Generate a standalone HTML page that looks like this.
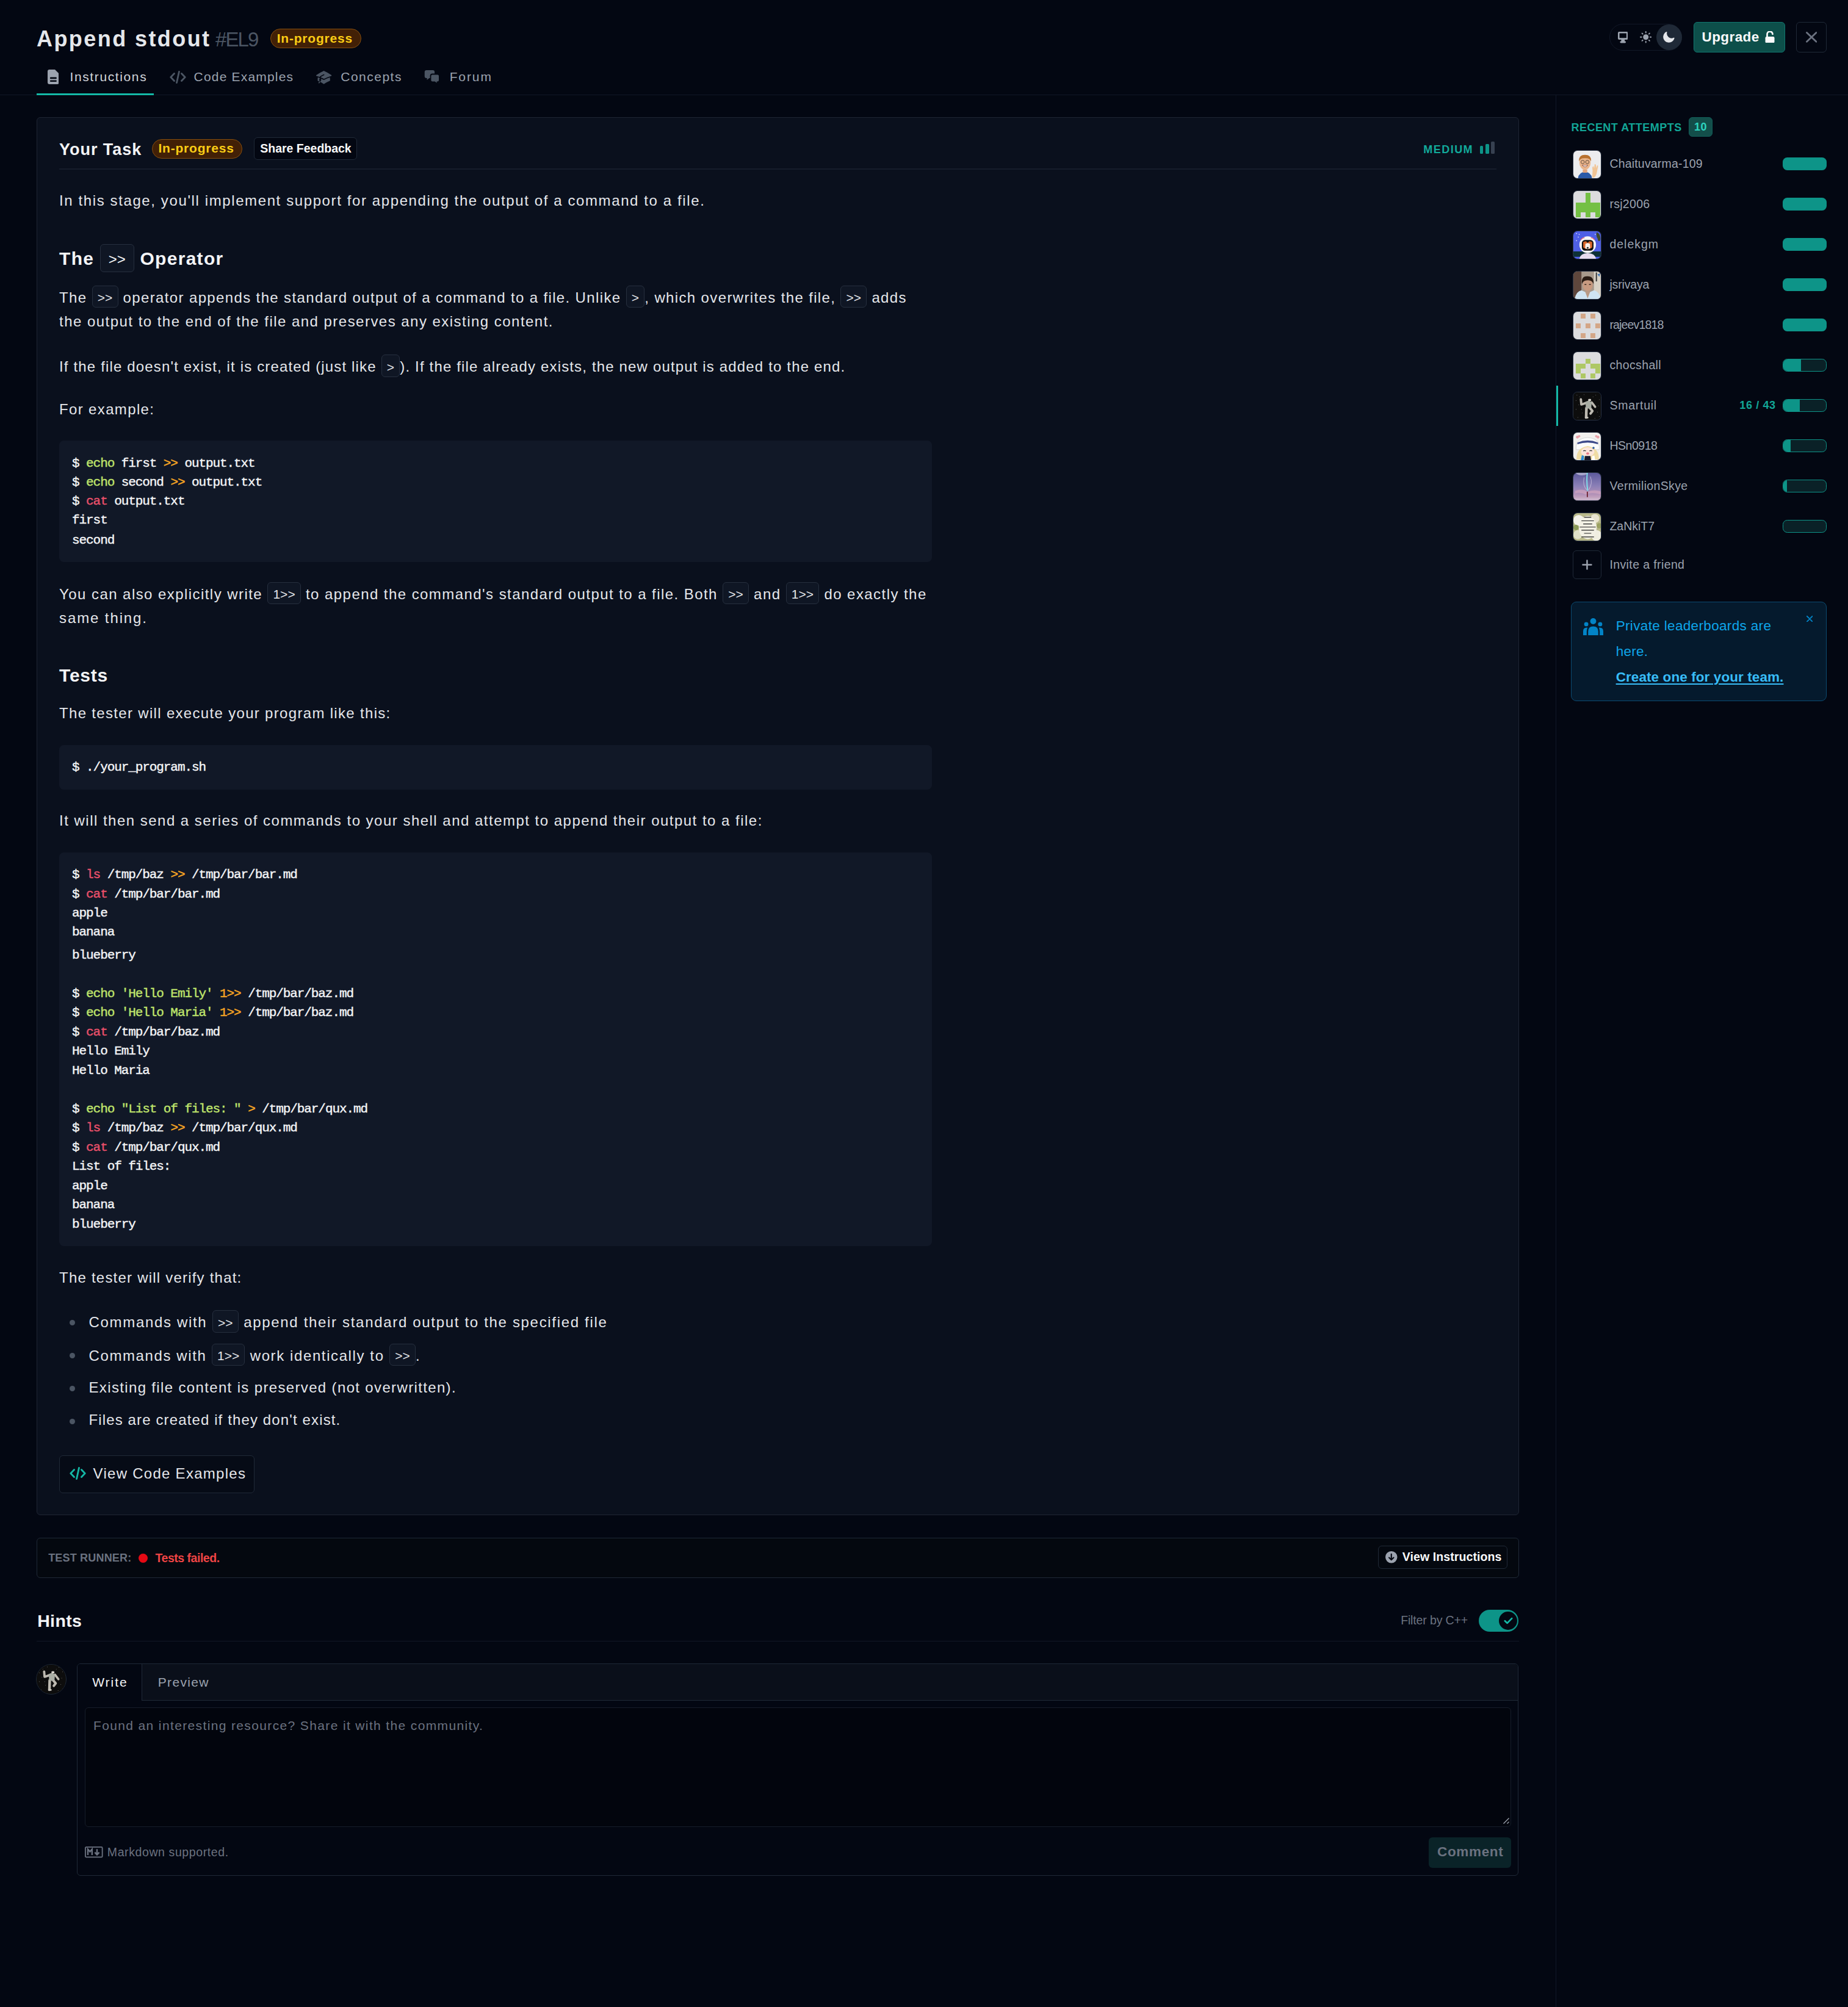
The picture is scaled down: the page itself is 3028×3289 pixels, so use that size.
<!DOCTYPE html>
<html><head><meta charset="utf-8"><title>Append stdout</title>
<style>
html{zoom:1.5;}
html,body{margin:0;padding:0;background:#030712;}
body{width:2018.67px;height:2192.67px;position:relative;overflow:hidden;font-family:"Liberation Sans", sans-serif;}
.t{position:absolute;white-space:pre;}
.s{font-family:"Liberation Sans", sans-serif;}
.m{font-family:"Liberation Mono", monospace;}
.b{position:absolute;box-sizing:border-box;}
.chip{display:inline-block;box-sizing:border-box;border:1px solid #262f3e;background:#0f1624;border-radius:4px;vertical-align:baseline;text-align:center;letter-spacing:0;}
svg{display:block;}
</style></head><body>
<div class="t s " style="left:40px;top:24.38px;font-size:24px;line-height:36px;font-weight:700;color:#e5e7eb;letter-spacing:1.62px;">Append stdout</div>
<div class="t s " style="left:235.3px;top:26.58px;font-size:22px;line-height:33px;font-weight:400;color:#4b5563;letter-spacing:-1.23px;">#EL9</div>
<div class="b" style="left:295.3px;top:31.3px;width:99.2px;height:21.2px;background:#422006;border:1px solid #854d0e;border-radius:999px;"></div>
<div class="t s " style="left:302.5px;top:31.35px;font-size:14px;line-height:21px;font-weight:700;color:#facc15;letter-spacing:0.52px;">In-progress</div>
<svg class="b" style="left:51.7px;top:75.8px" width="12.5" height="16" viewBox="0 0 12.5 16">
<path d="M2 0 H8 L12.5 4.5 V14 Q12.5 16 10.5 16 H2 Q0 16 0 14 V2 Q0 0 2 0 Z" fill="#9ca3af"/>
<rect x="2.6" y="8.4" width="7.3" height="1.7" rx="0.8" fill="#030712"/>
<rect x="2.6" y="11.6" width="7.3" height="1.7" rx="0.8" fill="#030712"/>
</svg>
<div class="t s " style="left:76.3px;top:73.35px;font-size:14px;line-height:21px;font-weight:400;color:#d1d5db;letter-spacing:1.08px;">Instructions</div>
<svg class="b" style="left:185px;top:77px" width="18" height="14" viewBox="0 0 18 14">
<path d="M5 3 L1.2 7 L5 11 M13 3 L16.8 7 L13 11 M10.3 1 L7.7 13" stroke="#4b5563" stroke-width="1.9" fill="none" stroke-linecap="round" stroke-linejoin="round"/>
</svg>
<div class="t s " style="left:211.7px;top:73.35px;font-size:14px;line-height:21px;font-weight:400;color:#9ca3af;letter-spacing:0.79px;">Code Examples</div>
<svg class="b" style="left:344.7px;top:75.5px" width="18.2" height="18.2" viewBox="0 0 24 24" fill="#4b5563">
<path d="M11.7 2.805a.75.75 0 01.6 0A60.65 60.65 0 0122.83 8.72a.75.75 0 01-.231 1.337 49.949 49.949 0 00-9.902 3.912l-.003.002-.34.18a.75.75 0 01-.707 0A50.009 50.009 0 007.5 12.174v-.224c0-.131.067-.248.172-.311a54.614 54.614 0 014.653-2.52.75.75 0 00-.65-1.352 56.129 56.129 0 00-4.78 2.589 1.858 1.858 0 00-.859 1.228 49.803 49.803 0 00-4.634-1.527.75.75 0 01-.231-1.337A60.653 60.653 0 0111.7 2.805z"/>
<path d="M13.06 15.473a48.45 48.45 0 017.666-3.282c.134 1.414.22 2.843.255 4.285a.75.75 0 01-.46.71 47.878 47.878 0 00-8.105 4.342.75.75 0 01-.832 0 47.877 47.877 0 00-8.104-4.342.75.75 0 01-.461-.71c.035-1.442.121-2.87.255-4.286A48.4 48.4 0 016 13.18v1.27a1.5 1.5 0 00-.14 2.508c-.09.38-.222.753-.397 1.11.452.213.901.434 1.346.661a6.729 6.729 0 00.551-1.608 1.5 1.5 0 00.14-2.67v-.645a48.549 48.549 0 013.44 1.668 2.25 2.25 0 002.12 0z"/>
<path d="M4.462 19.462c.42-.419.753-.89 1-1.394.453.213.902.434 1.347.661a6.743 6.743 0 01-1.286 1.794.75.75 0 11-1.06-1.06z"/>
</svg>
<div class="t s " style="left:372.2px;top:73.35px;font-size:14px;line-height:21px;font-weight:400;color:#9ca3af;letter-spacing:0.99px;">Concepts</div>
<svg class="b" style="left:463.5px;top:76px" width="17.5" height="16.5" viewBox="0 0 17.5 16.5" fill="#4b5563">
<path d="M2.5 0.7 H9.4 Q11.4 0.7 11.4 2.7 V7.3 Q11.4 9.3 9.4 9.3 H5.6 L3 11.4 L3.2 9.3 H2.5 Q0.5 9.3 0.5 7.3 V2.7 Q0.5 0.7 2.5 0.7 Z"/>
<path d="M9 5 H14.6 Q16.6 5 16.6 7 V11.6 Q16.6 13.6 14.6 13.6 H14.3 L14.4 15.9 L11.6 13.6 H9 Q7 13.6 7 11.6 V7 Q7 5 9 5 Z" stroke="#030712" stroke-width="1.2"/>
</svg>
<div class="t s " style="left:491.1px;top:73.35px;font-size:14px;line-height:21px;font-weight:400;color:#9ca3af;letter-spacing:1.26px;">Forum</div>
<div class="b" style="left:0px;top:103px;width:2018.67px;height:1px;background:#111827;"></div>
<div class="b" style="left:40px;top:101.7px;width:128px;height:2.3px;background:#14b8a6;"></div>
<div class="b" style="left:1758px;top:25.7px;width:79px;height:29.5px;border:1px solid #111827;border-radius:999px;"></div>
<svg class="b" style="left:1767.2px;top:34.9px" width="11" height="12.3" viewBox="0 0 11 12.3">
<rect x="0" y="0" width="11" height="8.6" rx="1.3" fill="#9ca3af"/>
<rect x="1.7" y="1.7" width="7.6" height="5.1" fill="#030712"/>
<rect x="3.6" y="8.4" width="3.8" height="2.3" fill="#9ca3af"/>
<rect x="2.3" y="10.4" width="6.4" height="1.9" rx="0.9" fill="#9ca3af"/>
</svg>
<svg class="b" style="left:1791.3px;top:34.3px" width="13" height="13" viewBox="-6.5 -6.5 13 13">
<circle cx="0" cy="0" r="3" fill="#9ca3af"/>
<g stroke="#9ca3af" stroke-width="1.3" stroke-linecap="round">
<line x1="0" y1="-5.8" x2="0" y2="-4.8"/><line x1="0" y1="5.8" x2="0" y2="4.8"/>
<line x1="-5.8" y1="0" x2="-4.8" y2="0"/><line x1="5.8" y1="0" x2="4.8" y2="0"/>
<line x1="-4.1" y1="-4.1" x2="-3.4" y2="-3.4"/><line x1="4.1" y1="4.1" x2="3.4" y2="3.4"/>
<line x1="-4.1" y1="4.1" x2="-3.4" y2="3.4"/><line x1="4.1" y1="-4.1" x2="3.4" y2="-3.4"/>
</g></svg>
<div class="b" style="left:1809.3px;top:26.5px;width:28px;height:28px;background:#1f2937;border-radius:999px;"></div>
<svg class="b" style="left:1815.6px;top:33.1px" width="14.6" height="14.6" viewBox="0 0 20 20">
<path d="M7.455 2.004a.75.75 0 01.26.77 7 7 0 009.958 7.967.75.75 0 011.067.853A8.5 8.5 0 116.647 1.921a.75.75 0 01.808.083z" fill="#e5e7eb"/>
</svg>
<div class="b" style="left:1850px;top:24.2px;width:100px;height:32.9px;background:#0d4f4a;border:1px solid #0f766e;border-radius:4px;"></div>
<div class="t s " style="left:1859px;top:29.5px;font-size:15px;line-height:22px;font-weight:700;color:#f9fafb;letter-spacing:0.28px;">Upgrade</div>
<svg class="b" style="left:1927.6px;top:33.8px" width="12" height="13" viewBox="0 0 12 13">
<path d="M3 6 V3.6 A3 3 0 0 1 9 3.3" stroke="#f9fafb" stroke-width="1.8" fill="none" stroke-linecap="round"/>
<rect x="1" y="6" width="10" height="7" rx="1.5" fill="#f9fafb"/>
</svg>
<div class="b" style="left:1962px;top:24.2px;width:33.3px;height:32.9px;border:1px solid #1f2937;border-radius:4px;"></div>
<svg class="b" style="left:1972.4px;top:34.9px" width="12.3" height="11.8" viewBox="0 0 12.3 11.8">
<path d="M1 1 L11.3 10.8 M11.3 1 L1 10.8" stroke="#6b7280" stroke-width="1.9" stroke-linecap="round"/>
</svg>
<div class="b" style="left:1699px;top:103.5px;width:1px;height:2089.17px;background:#111827;"></div>
<div class="b" style="left:40px;top:128.3px;width:1619px;height:1527.2px;background:#0a101d;border:1px solid #1f2533;border-radius:4px;"></div>
<div class="t s " style="left:64.7px;top:149.96px;font-size:18px;line-height:27px;font-weight:700;color:#f3f4f6;letter-spacing:0.64px;">Your Task</div>
<div class="b" style="left:166.2px;top:152px;width:98.8px;height:21px;background:#422006;border:1px solid #854d0e;border-radius:999px;"></div>
<div class="t s " style="left:173px;top:151.35px;font-size:14px;line-height:21px;font-weight:700;color:#facc15;letter-spacing:0.52px;">In-progress</div>
<div class="b" style="left:277.5px;top:150.3px;width:112.2px;height:24.7px;background:#030712;border:1px solid #1f2937;border-radius:4px;"></div>
<div class="t s " style="left:284.2px;top:152.2px;font-size:13px;line-height:20px;font-weight:700;color:#f9fafb;letter-spacing:-0.01px;">Share Feedback</div>
<div class="t s " style="left:1554.9px;top:154.84px;font-size:12px;line-height:18px;font-weight:700;color:#12a99a;letter-spacing:0.97px;">MEDIUM</div>
<div class="b" style="left:1616.5px;top:159.1px;width:3.8px;height:8.9px;background:#0d9488;border-radius:1px;"></div>
<div class="b" style="left:1622.5px;top:157.3px;width:4.1px;height:10.7px;background:#0d9488;border-radius:1px;"></div>
<div class="b" style="left:1628.7px;top:154.6px;width:4.1px;height:13.4px;background:#374151;border-radius:1px;"></div>
<div class="b" style="left:64.7px;top:184.2px;width:1570px;height:1px;background:#161d2b;"></div>
<div class="t s " style="left:64.7px;top:207.16px;font-size:16px;line-height:24px;font-weight:400;color:#e5e7eb;letter-spacing:1.07px;">In this stage, you&#x27;ll implement support for appending the output of a command to a file.</div>
<div class="t s " style="left:64.7px;top:266.37px;font-size:20px;line-height:30px;font-weight:700;color:#f3f4f6;letter-spacing:0.86px;">The <span class="chip" style="width:37.3px;height:31px;font-size:16px;line-height:29px;padding-top:1.96px;font-weight:400;">&gt;&gt;</span> Operator</div>
<div class="t s " style="left:64.7px;top:311.76px;font-size:16px;line-height:24px;font-weight:400;color:#e5e7eb;letter-spacing:0.91px;">The <span class="chip" style="padding:0 5.5px;height:24.3px;font-size:14px;line-height:22.3px;padding-top:1.8px;">&gt;&gt;</span> operator appends the standard output of a command to a file. Unlike <span class="chip" style="padding:0 5.5px;height:24.3px;font-size:14px;line-height:22.3px;padding-top:1.8px;">&gt;</span>, which overwrites the file, <span class="chip" style="padding:0 5.5px;height:24.3px;font-size:14px;line-height:22.3px;padding-top:1.8px;">&gt;&gt;</span> adds</div>
<div class="t s " style="left:64.7px;top:339.16px;font-size:16px;line-height:24px;font-weight:400;color:#e5e7eb;letter-spacing:0.98px;">the output to the end of the file and preserves any existing content.</div>
<div class="t s " style="left:64.7px;top:387.46px;font-size:16px;line-height:24px;font-weight:400;color:#e5e7eb;letter-spacing:0.77px;">If the file doesn&#x27;t exist, it is created (just like <span class="chip" style="padding:0 5.5px;height:24.3px;font-size:14px;line-height:22.3px;padding-top:1.8px;">&gt;</span>). If the file already exists, the new output is added to the end.</div>
<div class="t s " style="left:64.7px;top:435.16px;font-size:16px;line-height:24px;font-weight:400;color:#e5e7eb;letter-spacing:0.9px;">For example:</div>
<div class="b" style="left:64.7px;top:481.3px;width:953.3px;height:132.4px;background:#111827;border-radius:5px;"></div>
<div class="t m " style="left:78.7px;top:496.57px;font-size:14px;line-height:20px;font-weight:400;color:#f3f4f6;letter-spacing:-0.72px;font-weight:400;-webkit-text-stroke:0.3px currentColor;"><span style="color:#f3f4f6">$ </span><span style="color:#bfe36b">echo</span><span style="color:#f3f4f6"> first </span><span style="color:#f5a524">&gt;&gt;</span><span style="color:#f3f4f6"> output.txt</span></div>
<div class="t m " style="left:78.7px;top:517.07px;font-size:14px;line-height:20px;font-weight:400;color:#f3f4f6;letter-spacing:-0.72px;font-weight:400;-webkit-text-stroke:0.3px currentColor;"><span style="color:#f3f4f6">$ </span><span style="color:#bfe36b">echo</span><span style="color:#f3f4f6"> second </span><span style="color:#f5a524">&gt;&gt;</span><span style="color:#f3f4f6"> output.txt</span></div>
<div class="t m " style="left:78.7px;top:538.27px;font-size:14px;line-height:20px;font-weight:400;color:#f3f4f6;letter-spacing:-0.72px;font-weight:400;-webkit-text-stroke:0.3px currentColor;"><span style="color:#f3f4f6">$ </span><span style="color:#e8506a">cat</span><span style="color:#f3f4f6"> output.txt</span></div>
<div class="t m " style="left:78.7px;top:558.77px;font-size:14px;line-height:20px;font-weight:400;color:#f3f4f6;letter-spacing:-0.72px;font-weight:400;-webkit-text-stroke:0.3px currentColor;"><span style="color:#f3f4f6">first</span></div>
<div class="t m " style="left:78.7px;top:580.47px;font-size:14px;line-height:20px;font-weight:400;color:#f3f4f6;letter-spacing:-0.72px;font-weight:400;-webkit-text-stroke:0.3px currentColor;"><span style="color:#f3f4f6">second</span></div>
<div class="t s " style="left:64.7px;top:635.76px;font-size:16px;line-height:24px;font-weight:400;color:#e5e7eb;letter-spacing:0.96px;">You can also explicitly write <span class="chip" style="padding:0 5.5px;height:24.3px;font-size:14px;line-height:22.3px;padding-top:1.8px;">1&gt;&gt;</span> to append the command&#x27;s standard output to a file. Both <span class="chip" style="padding:0 5.5px;height:24.3px;font-size:14px;line-height:22.3px;padding-top:1.8px;">&gt;&gt;</span> and <span class="chip" style="padding:0 5.5px;height:24.3px;font-size:14px;line-height:22.3px;padding-top:1.8px;">1&gt;&gt;</span> do exactly the</div>
<div class="t s " style="left:64.7px;top:663.26px;font-size:16px;line-height:24px;font-weight:400;color:#e5e7eb;letter-spacing:1.26px;">same thing.</div>
<div class="t s " style="left:64.7px;top:722.77px;font-size:20px;line-height:30px;font-weight:700;color:#f3f4f6;letter-spacing:0.51px;">Tests</div>
<div class="t s " style="left:64.7px;top:767.46px;font-size:16px;line-height:24px;font-weight:400;color:#e5e7eb;letter-spacing:0.88px;">The tester will execute your program like this:</div>
<div class="b" style="left:64.7px;top:814.2px;width:953.3px;height:48.8px;background:#111827;border-radius:5px;"></div>
<div class="t m " style="left:78.7px;top:828.77px;font-size:14px;line-height:20px;font-weight:400;color:#f3f4f6;letter-spacing:-0.72px;font-weight:400;-webkit-text-stroke:0.3px currentColor;"><span style="color:#f3f4f6">$ ./your_program.sh</span></div>
<div class="t s " style="left:64.7px;top:884.46px;font-size:16px;line-height:24px;font-weight:400;color:#e5e7eb;letter-spacing:0.99px;">It will then send a series of commands to your shell and attempt to append their output to a file:</div>
<div class="b" style="left:64.7px;top:931.3px;width:953.3px;height:430px;background:#111827;border-radius:5px;"></div>
<div class="t m " style="left:78.7px;top:946.27px;font-size:14px;line-height:20px;font-weight:400;color:#f3f4f6;letter-spacing:-0.72px;font-weight:400;-webkit-text-stroke:0.3px currentColor;"><span style="color:#f3f4f6">$ </span><span style="color:#e8506a">ls</span><span style="color:#f3f4f6"> /tmp/baz </span><span style="color:#f5a524">&gt;&gt;</span><span style="color:#f3f4f6"> /tmp/bar/bar.md</span></div>
<div class="t m " style="left:78.7px;top:967.07px;font-size:14px;line-height:20px;font-weight:400;color:#f3f4f6;letter-spacing:-0.72px;font-weight:400;-webkit-text-stroke:0.3px currentColor;"><span style="color:#f3f4f6">$ </span><span style="color:#e8506a">cat</span><span style="color:#f3f4f6"> /tmp/bar/bar.md</span></div>
<div class="t m " style="left:78.7px;top:988.27px;font-size:14px;line-height:20px;font-weight:400;color:#f3f4f6;letter-spacing:-0.72px;font-weight:400;-webkit-text-stroke:0.3px currentColor;"><span style="color:#f3f4f6">apple</span></div>
<div class="t m " style="left:78.7px;top:1008.77px;font-size:14px;line-height:20px;font-weight:400;color:#f3f4f6;letter-spacing:-0.72px;font-weight:400;-webkit-text-stroke:0.3px currentColor;"><span style="color:#f3f4f6">banana</span></div>
<div class="t m " style="left:78.7px;top:1034.27px;font-size:14px;line-height:20px;font-weight:400;color:#f3f4f6;letter-spacing:-0.72px;font-weight:400;-webkit-text-stroke:0.3px currentColor;"><span style="color:#f3f4f6">blueberry</span></div>
<div class="t m " style="left:78.7px;top:1076.27px;font-size:14px;line-height:20px;font-weight:400;color:#f3f4f6;letter-spacing:-0.72px;font-weight:400;-webkit-text-stroke:0.3px currentColor;"><span style="color:#f3f4f6">$ </span><span style="color:#bfe36b">echo &#x27;Hello Emily&#x27;</span><span style="color:#f3f4f6"> </span><span style="color:#f5a524">1&gt;&gt;</span><span style="color:#f3f4f6"> /tmp/bar/baz.md</span></div>
<div class="t m " style="left:78.7px;top:1096.57px;font-size:14px;line-height:20px;font-weight:400;color:#f3f4f6;letter-spacing:-0.72px;font-weight:400;-webkit-text-stroke:0.3px currentColor;"><span style="color:#f3f4f6">$ </span><span style="color:#bfe36b">echo &#x27;Hello Maria&#x27;</span><span style="color:#f3f4f6"> </span><span style="color:#f5a524">1&gt;&gt;</span><span style="color:#f3f4f6"> /tmp/bar/baz.md</span></div>
<div class="t m " style="left:78.7px;top:1118.27px;font-size:14px;line-height:20px;font-weight:400;color:#f3f4f6;letter-spacing:-0.72px;font-weight:400;-webkit-text-stroke:0.3px currentColor;"><span style="color:#f3f4f6">$ </span><span style="color:#e8506a">cat</span><span style="color:#f3f4f6"> /tmp/bar/baz.md</span></div>
<div class="t m " style="left:78.7px;top:1138.77px;font-size:14px;line-height:20px;font-weight:400;color:#f3f4f6;letter-spacing:-0.72px;font-weight:400;-webkit-text-stroke:0.3px currentColor;"><span style="color:#f3f4f6">Hello Emily</span></div>
<div class="t m " style="left:78.7px;top:1159.97px;font-size:14px;line-height:20px;font-weight:400;color:#f3f4f6;letter-spacing:-0.72px;font-weight:400;-webkit-text-stroke:0.3px currentColor;"><span style="color:#f3f4f6">Hello Maria</span></div>
<div class="t m " style="left:78.7px;top:1202.07px;font-size:14px;line-height:20px;font-weight:400;color:#f3f4f6;letter-spacing:-0.72px;font-weight:400;-webkit-text-stroke:0.3px currentColor;"><span style="color:#f3f4f6">$ </span><span style="color:#bfe36b">echo &quot;List of files: &quot;</span><span style="color:#f3f4f6"> </span><span style="color:#f5a524">&gt;</span><span style="color:#f3f4f6"> /tmp/bar/qux.md</span></div>
<div class="t m " style="left:78.7px;top:1222.97px;font-size:14px;line-height:20px;font-weight:400;color:#f3f4f6;letter-spacing:-0.72px;font-weight:400;-webkit-text-stroke:0.3px currentColor;"><span style="color:#f3f4f6">$ </span><span style="color:#e8506a">ls</span><span style="color:#f3f4f6"> /tmp/baz </span><span style="color:#f5a524">&gt;&gt;</span><span style="color:#f3f4f6"> /tmp/bar/qux.md</span></div>
<div class="t m " style="left:78.7px;top:1244.27px;font-size:14px;line-height:20px;font-weight:400;color:#f3f4f6;letter-spacing:-0.72px;font-weight:400;-webkit-text-stroke:0.3px currentColor;"><span style="color:#f3f4f6">$ </span><span style="color:#e8506a">cat</span><span style="color:#f3f4f6"> /tmp/bar/qux.md</span></div>
<div class="t m " style="left:78.7px;top:1264.97px;font-size:14px;line-height:20px;font-weight:400;color:#f3f4f6;letter-spacing:-0.72px;font-weight:400;-webkit-text-stroke:0.3px currentColor;"><span style="color:#f3f4f6">List of files:</span></div>
<div class="t m " style="left:78.7px;top:1286.27px;font-size:14px;line-height:20px;font-weight:400;color:#f3f4f6;letter-spacing:-0.72px;font-weight:400;-webkit-text-stroke:0.3px currentColor;"><span style="color:#f3f4f6">apple</span></div>
<div class="t m " style="left:78.7px;top:1306.57px;font-size:14px;line-height:20px;font-weight:400;color:#f3f4f6;letter-spacing:-0.72px;font-weight:400;-webkit-text-stroke:0.3px currentColor;"><span style="color:#f3f4f6">banana</span></div>
<div class="t m " style="left:78.7px;top:1327.97px;font-size:14px;line-height:20px;font-weight:400;color:#f3f4f6;letter-spacing:-0.72px;font-weight:400;-webkit-text-stroke:0.3px currentColor;"><span style="color:#f3f4f6">blueberry</span></div>
<div class="t s " style="left:64.7px;top:1383.76px;font-size:16px;line-height:24px;font-weight:400;color:#e5e7eb;letter-spacing:0.81px;">The tester will verify that:</div>
<div class="b" style="left:75.7px;top:1441.7px;width:6px;height:6px;background:#4b5563;border-radius:999px;"></div>
<div class="t s " style="left:97px;top:1431.66px;font-size:16px;line-height:24px;font-weight:400;color:#e5e7eb;letter-spacing:1.12px;">Commands with <span class="chip" style="padding:0 5.5px;height:24.3px;font-size:14px;line-height:22.3px;padding-top:1.8px;">&gt;&gt;</span> append their standard output to the specified file</div>
<div class="b" style="left:75.7px;top:1477.8px;width:6px;height:6px;background:#4b5563;border-radius:999px;"></div>
<div class="t s " style="left:97px;top:1467.76px;font-size:16px;line-height:24px;font-weight:400;color:#e5e7eb;letter-spacing:1.07px;">Commands with <span class="chip" style="padding:0 5.5px;height:24.3px;font-size:14px;line-height:22.3px;padding-top:1.8px;">1&gt;&gt;</span> work identically to <span class="chip" style="padding:0 5.5px;height:24.3px;font-size:14px;line-height:22.3px;padding-top:1.8px;">&gt;&gt;</span>.</div>
<div class="b" style="left:75.7px;top:1513.8px;width:6px;height:6px;background:#4b5563;border-radius:999px;"></div>
<div class="t s " style="left:97px;top:1503.76px;font-size:16px;line-height:24px;font-weight:400;color:#e5e7eb;letter-spacing:0.9px;">Existing file content is preserved (not overwritten).</div>
<div class="b" style="left:75.7px;top:1549.7px;width:6px;height:6px;background:#4b5563;border-radius:999px;"></div>
<div class="t s " style="left:97px;top:1539.66px;font-size:16px;line-height:24px;font-weight:400;color:#e5e7eb;letter-spacing:0.75px;">Files are created if they don&#x27;t exist.</div>
<div class="b" style="left:64.7px;top:1590px;width:213.6px;height:41.2px;border:1px solid #1f2937;border-radius:4px;background:#060b16;"></div>
<svg class="b" style="left:76.2px;top:1602.5px" width="18" height="14" viewBox="0 0 18 14">
<path d="M5 3 L1.2 7 L5 11 M13 3 L16.8 7 L13 11 M10.3 1 L7.7 13" stroke="#14b8a6" stroke-width="1.9" fill="none" stroke-linecap="round" stroke-linejoin="round"/>
</svg>
<div class="t s " style="left:101.7px;top:1598.26px;font-size:16px;line-height:24px;font-weight:400;color:#e5e7eb;letter-spacing:0.85px;">View Code Examples</div>
<div class="t s " style="left:1716.3px;top:130.34px;font-size:12px;line-height:18px;font-weight:700;color:#12a596;letter-spacing:0.32px;">RECENT ATTEMPTS</div>
<div class="b" style="left:1844.7px;top:128px;width:25.8px;height:21.2px;background:#134e4a;border:1px solid #115e59;border-radius:4px;"></div>
<div class="t s " style="left:1844.7px;top:130.14px;font-size:12px;line-height:18px;font-weight:700;color:#2dd4bf;letter-spacing:0.2px;width:25.8px;text-align:center;">10</div>
<div class="b" style="left:1718.3px;top:163.8px;width:31.3px;height:31.3px;border-radius:5px;overflow:hidden;border:1px solid #2a3445"><svg width="31.3" height="31.3" viewBox="0 0 32 32"><rect width="32" height="32" fill="#ececee"/><path d="M5 32 Q5.5 24 13 23.5 Q20.5 24 21 32Z" fill="#2b5aa8"/><path d="M10.5 21 H15.5 V24.5 H10.5Z" fill="#e3a57c"/><ellipse cx="13" cy="13.5" rx="6.3" ry="7.6" fill="#eab58c"/><path d="M6.3 12 Q5.8 4.5 13 4.6 Q20.3 4.5 19.8 12 Q18.5 8 13 8.3 Q7.6 8 6.3 12Z" fill="#b8712f"/><circle cx="10.4" cy="12.6" r="1.9" fill="none" stroke="#4a3a30" stroke-width="0.6"/><circle cx="15.6" cy="12.6" r="1.9" fill="none" stroke="#4a3a30" stroke-width="0.6"/><path d="M9.8 16.2 Q13 19.8 16.2 16.2Z" fill="#fff" stroke="#7a3324" stroke-width="0.5"/><path d="M21 30 L21.5 22 Q20.5 17.5 22.6 17.3 L23.2 20 L23.8 15 Q25 14.7 25.2 16 L25.4 19.5 L26.6 16.2 Q27.8 16.3 27.5 17.8 L26.3 24 Q25.5 28.5 23 30Z" fill="#f1c495"/></svg></div>
<div class="t s " style="left:1758.3px;top:168.8px;font-size:13px;line-height:20px;font-weight:400;color:#9ca3af;letter-spacing:0.12px;">Chaituvarma-109</div>
<div class="b" style="left:1947.2px;top:172px;width:48.1px;height:13.8px;background:#0d9488;border-radius:5px;"></div>
<div class="b" style="left:1718.3px;top:207.8px;width:31.3px;height:31.3px;border-radius:5px;overflow:hidden;border:1px solid #2a3445"><svg width="31.3" height="31.3" viewBox="0 0 32 32"><rect width="32" height="32" fill="#dcdcde"/><g fill="#74c044" shape-rendering="crispEdges"><rect x="13.43" y="2.32" width="5.5" height="5.5"/><rect x="13.43" y="7.77" width="5.5" height="5.5"/><rect x="2.53" y="13.22" width="5.5" height="5.5"/><rect x="7.98" y="13.22" width="5.5" height="5.5"/><rect x="13.43" y="13.22" width="5.5" height="5.5"/><rect x="18.88" y="13.22" width="5.5" height="5.5"/><rect x="24.33" y="13.22" width="5.5" height="5.5"/><rect x="2.53" y="18.67" width="5.5" height="5.5"/><rect x="7.98" y="18.67" width="5.5" height="5.5"/><rect x="13.43" y="18.67" width="5.5" height="5.5"/><rect x="18.88" y="18.67" width="5.5" height="5.5"/><rect x="24.33" y="18.67" width="5.5" height="5.5"/><rect x="2.53" y="24.12" width="5.5" height="5.5"/><rect x="13.43" y="24.12" width="5.5" height="5.5"/><rect x="24.33" y="24.12" width="5.5" height="5.5"/></g></svg></div>
<div class="t s " style="left:1758.3px;top:212.8px;font-size:13px;line-height:20px;font-weight:400;color:#9ca3af;letter-spacing:0.19px;">rsj2006</div>
<div class="b" style="left:1947.2px;top:216px;width:48.1px;height:13.8px;background:#0d9488;border-radius:5px;"></div>
<div class="b" style="left:1718.3px;top:251.8px;width:31.3px;height:31.3px;border-radius:5px;overflow:hidden;border:1px solid #2a3445"><svg width="31.3" height="31.3" viewBox="0 0 32 32"><rect width="32" height="32" fill="#4f5fe6"/><g fill="#dfe3ff"><rect x="3" y="2" width="1" height="1"/><rect x="6" y="3" width="1" height="1"/><rect x="5" y="6" width="1" height="1"/><rect x="24" y="3" width="1" height="1"/><rect x="3" y="10" width="1" height="1"/></g><path d="M26 1 Q31 3 30 10 Q28 13 27 8 Q25 5 26 1Z" fill="#3f4a2a"/><rect y="22.5" width="32" height="6" fill="#0e3136"/><path d="M6.5 32 Q7 24.5 16 24.5 Q25 24.5 25.5 32Z" fill="#e6dcef"/><circle cx="16" cy="15" r="9.3" fill="#f5f5f7"/><path d="M8.3 9.5 Q11 6.5 12.5 7.5" stroke="#e06070" stroke-width="1" fill="none"/><path d="M23.7 9.5 Q21 6.5 19.5 7.5" stroke="#e06070" stroke-width="1" fill="none"/><rect x="9.5" y="9.7" width="13" height="12" rx="3.5" fill="#111"/><path d="M11 12 L14 11 L16 13 L18 11 L21 12 L21 18 Q16 22 11 18Z" fill="#d9662a"/><path d="M13.5 14 L16 13.2 L18.5 14 L18.8 19 Q16 21 13.2 19Z" fill="#f6f0ea"/><circle cx="16" cy="18.6" r="1" fill="#222"/></svg></div>
<div class="t s " style="left:1758.3px;top:256.8px;font-size:13px;line-height:20px;font-weight:400;color:#9ca3af;letter-spacing:0.66px;">delekgm</div>
<div class="b" style="left:1947.2px;top:260px;width:48.1px;height:13.8px;background:#0d9488;border-radius:5px;"></div>
<div class="b" style="left:1718.3px;top:295.8px;width:31.3px;height:31.3px;border-radius:5px;overflow:hidden;border:1px solid #2a3445"><svg width="31.3" height="31.3" viewBox="0 0 32 32"><rect width="32" height="32" fill="#a89a8c"/><rect width="9" height="32" fill="#5e463c"/><rect x="23" width="9" height="32" fill="#d8d2c6"/><rect x="25" y="1" width="1.5" height="10" fill="#444"/><path d="M27 3 L30 2 L29 6Z" fill="#3b6fb0"/><path d="M1 32 Q3 22 9 21 L16 24 L23 21 Q29 22 31 32Z" fill="#cfe4f2"/><path d="M13 22 L16 30 L19 22Z" fill="#b99a85"/><ellipse cx="16" cy="14.8" rx="5.6" ry="7" fill="#c89a80"/><path d="M9.6 14 Q8.5 5 15.5 5.3 Q23.2 5 22.4 14 Q21 9.5 16 9.7 Q11 9.5 9.6 14Z" fill="#2a1c14"/><path d="M12.5 14.5 H14.5 M17.5 14.5 H19.5" stroke="#3a2a20" stroke-width="0.9"/></svg></div>
<div class="t s " style="left:1758.3px;top:300.8px;font-size:13px;line-height:20px;font-weight:400;color:#9ca3af;letter-spacing:-0.11px;">jsrivaya</div>
<div class="b" style="left:1947.2px;top:304px;width:48.1px;height:13.8px;background:#0d9488;border-radius:5px;"></div>
<div class="b" style="left:1718.3px;top:339.8px;width:31.3px;height:31.3px;border-radius:5px;overflow:hidden;border:1px solid #2a3445"><svg width="31.3" height="31.3" viewBox="0 0 32 32"><rect width="32" height="32" fill="#dcdcde"/><g fill="#d3a687" shape-rendering="crispEdges"><rect x="7.98" y="2.32" width="5.5" height="5.5"/><rect x="18.88" y="2.32" width="5.5" height="5.5"/><rect x="2.53" y="13.22" width="5.5" height="5.5"/><rect x="13.43" y="13.22" width="5.5" height="5.5"/><rect x="24.33" y="13.22" width="5.5" height="5.5"/><rect x="7.98" y="24.12" width="5.5" height="5.5"/><rect x="18.88" y="24.12" width="5.5" height="5.5"/></g></svg></div>
<div class="t s " style="left:1758.3px;top:344.8px;font-size:13px;line-height:20px;font-weight:400;color:#9ca3af;letter-spacing:-0.56px;">rajeev1818</div>
<div class="b" style="left:1947.2px;top:348px;width:48.1px;height:13.8px;background:#0d9488;border-radius:5px;"></div>
<div class="b" style="left:1718.3px;top:383.8px;width:31.3px;height:31.3px;border-radius:5px;overflow:hidden;border:1px solid #2a3445"><svg width="31.3" height="31.3" viewBox="0 0 32 32"><rect width="32" height="32" fill="#dcdcde"/><g fill="#aec865" shape-rendering="crispEdges"><rect x="13.43" y="7.77" width="5.5" height="5.5"/><rect x="2.53" y="13.22" width="5.5" height="5.5"/><rect x="7.98" y="13.22" width="5.5" height="5.5"/><rect x="18.88" y="13.22" width="5.5" height="5.5"/><rect x="24.33" y="13.22" width="5.5" height="5.5"/><rect x="2.53" y="18.67" width="5.5" height="5.5"/><rect x="24.33" y="18.67" width="5.5" height="5.5"/><rect x="7.98" y="24.12" width="5.5" height="5.5"/><rect x="18.88" y="24.12" width="5.5" height="5.5"/></g></svg></div>
<div class="t s " style="left:1758.3px;top:388.8px;font-size:13px;line-height:20px;font-weight:400;color:#9ca3af;letter-spacing:0.24px;">chocshall</div>
<div class="b" style="left:1947.2px;top:392px;width:48.1px;height:13.8px;background:#0a2127;border:1px solid #0d9488;border-radius:5px;overflow:hidden;"><div style="position:absolute;left:0;top:0;bottom:0;width:19.2px;background:#0d9488;"></div></div>
<div class="b" style="left:1718.3px;top:427.8px;width:31.3px;height:31.3px;border-radius:5px;overflow:hidden;border:1px solid #2a3445"><svg width="31.3" height="31.3" viewBox="0 0 32 32"><rect width="32" height="32" fill="#0d0d0d"/><circle cx="4.0" cy="3.0" r="0.35" fill="#777"/><circle cx="7.0" cy="5.0" r="0.35" fill="#777"/><circle cx="12.0" cy="2.5" r="0.35" fill="#777"/><circle cx="25.0" cy="3.0" r="0.35" fill="#777"/><circle cx="29.0" cy="8.0" r="0.35" fill="#777"/><circle cx="3.0" cy="9.0" r="0.35" fill="#777"/><circle cx="6.0" cy="14.0" r="0.35" fill="#777"/><circle cx="3.0" cy="19.0" r="0.35" fill="#777"/><circle cx="10.0" cy="23.0" r="0.35" fill="#777"/><circle cx="27.0" cy="22.0" r="0.35" fill="#777"/><circle cx="29.0" cy="27.0" r="0.35" fill="#777"/><circle cx="5.0" cy="28.0" r="0.35" fill="#777"/><circle cx="24.0" cy="29.0" r="0.35" fill="#777"/><circle cx="22.0" cy="5.0" r="0.35" fill="#777"/><circle cx="9.0" cy="19.0" r="0.35" fill="#777"/><circle cx="28.0" cy="15.0" r="0.35" fill="#777"/><g stroke="#bdb9b0" stroke-linecap="round" stroke-linejoin="round" fill="none"><path d="M8.4 7.8 L8.9 13.6 L15 11.5" stroke-width="2.6"/><path d="M20.5 11.2 L24.4 16.3" stroke-width="2.4"/><path d="M14.6 17.6 L14.3 28" stroke-width="3"/><path d="M18.5 17.5 L21.3 20.8 L19.2 23.6" stroke-width="2.8"/></g><path d="M13.5 10.5 Q16 9 18 9.5 L20.5 11 L20 17 Q17 19 14 17.5 Z" fill="#a9ada4"/><rect x="16.6" y="7.4" width="3.2" height="2.4" rx="0.8" fill="#d6d3cc"/><rect x="12.8" y="27.3" width="4" height="1.8" rx="0.8" fill="#c8c4bc"/></svg></div>
<div class="t s " style="left:1758.3px;top:432.8px;font-size:13px;line-height:20px;font-weight:400;color:#9ca3af;letter-spacing:0.5px;">Smartuil</div>
<div class="b" style="left:1947.2px;top:436px;width:48.1px;height:13.8px;background:#0a2127;border:1px solid #0d9488;border-radius:5px;overflow:hidden;"><div style="position:absolute;left:0;top:0;bottom:0;width:18px;background:#0d9488;"></div></div>
<div class="b" style="left:1718.3px;top:471.8px;width:31.3px;height:31.3px;border-radius:5px;overflow:hidden;border:1px solid #2a3445"><svg width="31.3" height="31.3" viewBox="0 0 32 32"><rect width="32" height="32" fill="#f2f0ee"/><path d="M3 19 Q2 6 16 5.5 Q30 6 29 19Z" fill="#fbfbfb" stroke="#c9c9c9" stroke-width="0.5"/><path d="M4.5 11 Q16 6.5 27.5 11 L27.5 13 Q16 9 4.5 13Z" fill="#3d4a8a"/><g fill="#e8a0a8"><circle cx="4.5" cy="5" r="1.6"/><circle cx="6.5" cy="4" r="1.3"/><circle cx="25.5" cy="4" r="1.3"/><circle cx="27.5" cy="5" r="1.6"/></g><path d="M3.5 30 Q3 17 16 15 Q29 17 28.5 30Z" fill="#f0dca4"/><ellipse cx="16" cy="21.5" rx="7.5" ry="5.2" fill="#fce6dc"/><path d="M11 20.5 Q12.5 19.5 14 20.5 M18 20.5 Q19.5 19.5 21 20.5" stroke="#333" stroke-width="0.8" fill="none"/><ellipse cx="16" cy="23.3" rx="1.6" ry="1.3" fill="#e77a88"/><circle cx="22.5" cy="17" r="1.2" fill="#2b5aa0"/><path d="M8 32 L9.5 25 L12 26 L11.5 32Z" fill="#2f8fd8"/><path d="M12 32 L13 26 L19 26 L20 32Z" fill="#1a1a2a"/><path d="M20.5 32 L21 26 L23.5 25.5 L24.5 32Z" fill="#ffffff"/></svg></div>
<div class="t s " style="left:1758.3px;top:476.8px;font-size:13px;line-height:20px;font-weight:400;color:#9ca3af;letter-spacing:-0.32px;">HSn0918</div>
<div class="b" style="left:1947.2px;top:480px;width:48.1px;height:13.8px;background:#0a2127;border:1px solid #0d9488;border-radius:5px;overflow:hidden;"><div style="position:absolute;left:0;top:0;bottom:0;width:7.9px;background:#0d9488;"></div></div>
<div class="b" style="left:1718.3px;top:515.8px;width:31.3px;height:31.3px;border-radius:5px;overflow:hidden;border:1px solid #2a3445"><svg width="31.3" height="31.3" viewBox="0 0 32 32"><defs><linearGradient id="vg" x1="0" y1="0" x2="0" y2="1"><stop offset="0" stop-color="#5d5a9c"/><stop offset="0.45" stop-color="#8a7fb6"/><stop offset="0.75" stop-color="#b392b8"/><stop offset="1" stop-color="#d9b8c6"/></linearGradient></defs><rect width="32" height="32" fill="url(#vg)"/><path d="M2 0 Q8 5 16 1 L16 0Z" fill="#c8c6e0" opacity="0.7"/><path d="M2 20 Q10 17 16 21 Q24 18 31 21 L31 24 Q20 21 14 24 Q7 21 2 23Z" fill="#d8a8c0" opacity="0.6"/><path d="M15.5 0 Q14.5 10 16 20" stroke="#7fe8f0" stroke-width="1.2" fill="none"/><path d="M12 5 Q10 14 15 19 M19 4 Q22 12 17 19" stroke="#e8e0f0" stroke-width="0.4" fill="none"/><rect x="15" y="21" width="1.2" height="6" fill="#6a2030"/><rect y="28" width="32" height="4" fill="#c8b0c8"/></svg></div>
<div class="t s " style="left:1758.3px;top:520.8px;font-size:13px;line-height:20px;font-weight:400;color:#9ca3af;letter-spacing:0.23px;">VermilionSkye</div>
<div class="b" style="left:1947.2px;top:524px;width:48.1px;height:13.8px;background:#0a2127;border:1px solid #0d9488;border-radius:5px;overflow:hidden;"><div style="position:absolute;left:0;top:0;bottom:0;width:4px;background:#0d9488;"></div></div>
<div class="b" style="left:1718.3px;top:559.8px;width:31.3px;height:31.3px;border-radius:5px;overflow:hidden;border:1px solid #2a3445"><svg width="31.3" height="31.3" viewBox="0 0 32 32"><rect width="32" height="32" fill="#b9b98a"/><circle cx="6" cy="8" r="6" fill="#f4f2ea"/><circle cx="24" cy="6" r="5" fill="#e8e4cf"/><circle cx="5" cy="24" r="5" fill="#e0e0c8"/><circle cx="26" cy="25" r="6" fill="#f0eee0"/><ellipse cx="16" cy="16" rx="10" ry="13" fill="#f2f0e4"/><circle cx="3" cy="16" r="3" fill="#8a9a58"/><circle cx="29" cy="14" r="3" fill="#9aa060"/><g stroke="#222" stroke-width="0.75"><line x1="12" y1="4.5" x2="20" y2="4.5"/><line x1="9" y1="8.5" x2="23" y2="8.5"/><line x1="11" y1="12" x2="21" y2="12"/><line x1="7" y1="15.5" x2="25" y2="15.5"/><line x1="9" y1="19" x2="23" y2="19"/><line x1="12" y1="22.5" x2="20" y2="22.5"/><line x1="9" y1="26.5" x2="23" y2="26.5"/></g></svg></div>
<div class="t s " style="left:1758.3px;top:564.8px;font-size:13px;line-height:20px;font-weight:400;color:#9ca3af;letter-spacing:-0px;">ZaNkiT7</div>
<div class="b" style="left:1947.2px;top:568px;width:48.1px;height:13.8px;background:#0a2127;border:1px solid #0d9488;border-radius:5px;overflow:hidden;"><div style="position:absolute;left:0;top:0;bottom:0;width:0px;background:#0d9488;"></div></div>
<div class="b" style="left:1700px;top:421.3px;width:2px;height:44px;background:#14b8a6;"></div>
<div class="t s " style="left:1900.2px;top:433.94px;font-size:12px;line-height:18px;font-weight:700;color:#12a596;letter-spacing:0.42px;">16 / 43</div>
<div class="b" style="left:1718.3px;top:601.3px;width:31.2px;height:31.7px;border:1px solid #1f2937;border-radius:4px;"></div>
<svg class="b" style="left:1728.3px;top:611.3px" width="11.3" height="11.3" viewBox="0 0 11.3 11.3">
<path d="M5.65 1 V10.3 M1 5.65 H10.3" stroke="#9ca3af" stroke-width="1.7" stroke-linecap="round"/></svg>
<div class="t s " style="left:1758.3px;top:606.6px;font-size:13px;line-height:20px;font-weight:400;color:#9ca3af;letter-spacing:0.26px;">Invite a friend</div>
<div class="b" style="left:1716.2px;top:657.6px;width:279.1px;height:108.6px;background:#051a2d;border:1px solid #0b4a70;border-radius:6px;"></div>
<svg class="b" style="left:1729.3px;top:675px" width="22" height="19" viewBox="0 0 22 19">
<g fill="#0284c7"><circle cx="11" cy="3.3" r="3.3"/><circle cx="3.4" cy="6.6" r="2.3"/><circle cx="18.6" cy="6.6" r="2.3"/>
<path d="M5.5 19 V14.5 Q5.5 9 11 9 Q16.5 9 16.5 14.5 V19 Z"/><path d="M0 19 V14.5 Q0 10.3 3.8 10.3 Q4.5 10.3 4.8 10.5 Q3.9 12 3.9 14.5 V19Z"/><path d="M22 19 V14.5 Q22 10.3 18.2 10.3 Q17.5 10.3 17.2 10.5 Q18.1 12 18.1 14.5 V19Z"/></g></svg>
<div class="t s " style="left:1765.1px;top:672.5px;font-size:15px;line-height:22px;font-weight:400;color:#0ea5e9;letter-spacing:0.23px;">Private leaderboards are</div>
<div class="t s " style="left:1765.1px;top:700.8px;font-size:15px;line-height:22px;font-weight:400;color:#0ea5e9;letter-spacing:0.2px;">here.</div>
<div class="t s " style="left:1765.1px;top:728.5px;font-size:15px;line-height:22px;font-weight:700;color:#38bdf8;letter-spacing:0.06px;text-decoration:underline;text-underline-offset:2px;">Create one for your team.</div>
<svg class="b" style="left:1973.3px;top:672.6px" width="7" height="7" viewBox="0 0 7 7">
<path d="M0.5 0.5 L6.5 6.5 M6.5 0.5 L0.5 6.5" stroke="#0284c7" stroke-width="1.2" stroke-linecap="round"/></svg>
<div class="b" style="left:40px;top:1680.3px;width:1619px;height:43.9px;border:1px solid #1f2937;border-radius:4px;background:#04080f;"></div>
<div class="t s " style="left:52.8px;top:1693.54px;font-size:12px;line-height:18px;font-weight:700;color:#6b7280;letter-spacing:0.12px;">TEST RUNNER:</div>
<div class="b" style="left:151.2px;top:1697.5px;width:10.1px;height:10.1px;background:#e50914;border-radius:999px;"></div>
<div class="t s " style="left:169.7px;top:1692.2px;font-size:13px;line-height:20px;font-weight:700;color:#ef4444;letter-spacing:-0.32px;">Tests failed.</div>
<div class="b" style="left:1505.6px;top:1688.8px;width:140.8px;height:24.9px;border:1px solid #1f2937;border-radius:4px;"></div>
<svg class="b" style="left:1513.4px;top:1694.8px" width="13" height="13" viewBox="0 0 13 13">
<circle cx="6.5" cy="6.5" r="6.5" fill="#9ca3af"/><path d="M6.5 3.2 V9.3 M4 7 L6.5 9.5 L9 7" stroke="#030712" stroke-width="1.4" fill="none" stroke-linecap="round" stroke-linejoin="round"/></svg>
<div class="t s " style="left:1531.9px;top:1690.5px;font-size:13px;line-height:20px;font-weight:700;color:#f9fafb;letter-spacing:0.06px;">View Instructions</div>
<div class="t s " style="left:40.8px;top:1756.72px;font-size:19px;line-height:28px;font-weight:700;color:#f3f4f6;letter-spacing:0.23px;">Hints</div>
<div class="t s " style="left:1530.1px;top:1760.1px;font-size:13px;line-height:20px;font-weight:400;color:#6b7280;letter-spacing:-0.09px;">Filter by C++</div>
<div class="b" style="left:1615.3px;top:1758.7px;width:43.7px;height:23.8px;background:#0d9488;border-radius:999px;"></div>
<div class="b" style="left:1637.5px;top:1760.6px;width:19.8px;height:20px;background:#030712;border-radius:999px;"></div>
<svg class="b" style="left:1642.5px;top:1766.5px" width="10" height="8" viewBox="0 0 10 8">
<path d="M1.2 4.2 L3.8 6.6 L8.8 1.4" stroke="#14b8a6" stroke-width="1.8" fill="none" stroke-linecap="round" stroke-linejoin="round"/></svg>
<div class="b" style="left:40px;top:1792.4px;width:1619px;height:1px;background:#111827;"></div>
<div class="b" style="left:39.2px;top:1818.3px;width:33.3px;height:33.3px;border-radius:999px;overflow:hidden;background:#0d0d0d;border:1px solid #1f2937"><svg width="31.3" height="31.3" viewBox="0 0 32 32"><rect width="32" height="32" fill="#0d0d0d"/><circle cx="4.0" cy="3.0" r="0.35" fill="#777"/><circle cx="7.0" cy="5.0" r="0.35" fill="#777"/><circle cx="12.0" cy="2.5" r="0.35" fill="#777"/><circle cx="25.0" cy="3.0" r="0.35" fill="#777"/><circle cx="29.0" cy="8.0" r="0.35" fill="#777"/><circle cx="3.0" cy="9.0" r="0.35" fill="#777"/><circle cx="6.0" cy="14.0" r="0.35" fill="#777"/><circle cx="3.0" cy="19.0" r="0.35" fill="#777"/><circle cx="10.0" cy="23.0" r="0.35" fill="#777"/><circle cx="27.0" cy="22.0" r="0.35" fill="#777"/><circle cx="29.0" cy="27.0" r="0.35" fill="#777"/><circle cx="5.0" cy="28.0" r="0.35" fill="#777"/><circle cx="24.0" cy="29.0" r="0.35" fill="#777"/><circle cx="22.0" cy="5.0" r="0.35" fill="#777"/><circle cx="9.0" cy="19.0" r="0.35" fill="#777"/><circle cx="28.0" cy="15.0" r="0.35" fill="#777"/><g stroke="#bdb9b0" stroke-linecap="round" stroke-linejoin="round" fill="none"><path d="M8.4 7.8 L8.9 13.6 L15 11.5" stroke-width="2.6"/><path d="M20.5 11.2 L24.4 16.3" stroke-width="2.4"/><path d="M14.6 17.6 L14.3 28" stroke-width="3"/><path d="M18.5 17.5 L21.3 20.8 L19.2 23.6" stroke-width="2.8"/></g><path d="M13.5 10.5 Q16 9 18 9.5 L20.5 11 L20 17 Q17 19 14 17.5 Z" fill="#a9ada4"/><rect x="16.6" y="7.4" width="3.2" height="2.4" rx="0.8" fill="#d6d3cc"/><rect x="12.8" y="27.3" width="4" height="1.8" rx="0.8" fill="#c8c4bc"/></svg></div>
<div class="b" style="left:84.2px;top:1817.2px;width:1574.8px;height:232px;border:1px solid #1f2937;border-radius:4px;background:#030712;overflow:hidden;"><div style="position:absolute;left:0;top:0;right:0;height:40px;background:#0a0f1a;border-bottom:1px solid #1f2937;box-sizing:border-box"></div><div style="position:absolute;left:0;top:0;width:70.8px;height:40px;background:#030712;border-right:1px solid #1f2937;box-sizing:border-box"></div></div>
<div class="t s " style="left:100.8px;top:1827.15px;font-size:14px;line-height:21px;font-weight:400;color:#f3f4f6;letter-spacing:1.32px;">Write</div>
<div class="t s " style="left:172.5px;top:1827.15px;font-size:14px;line-height:21px;font-weight:400;color:#9ca3af;letter-spacing:0.9px;">Preview</div>
<div class="b" style="left:92.8px;top:1865.5px;width:1557.6px;height:130.8px;border:1px solid #161d2a;border-radius:4px;background:#02050d;"></div>
<div class="t s " style="left:102px;top:1874.65px;font-size:14px;line-height:21px;font-weight:400;color:#6b7280;letter-spacing:0.91px;">Found an interesting resource? Share it with the community.</div>
<svg class="b" style="left:1641px;top:1985.5px" width="8" height="8" viewBox="0 0 8 8">
<path d="M1 7 L7 1 M5 7 L7 5" stroke="#9ca3af" stroke-width="0.9"/></svg>
<svg class="b" style="left:92.8px;top:2017.5px" width="19.7" height="12.2" viewBox="0 0 19.7 12.2">
<rect x="0.6" y="0.6" width="18.5" height="11" rx="1" stroke="#6b7280" stroke-width="1.2" fill="none"/>
<path d="M3.3 9.3 V3 L5.6 5.6 L7.9 3 V9.3" stroke="#6b7280" stroke-width="1.6" fill="none"/>
<path d="M13.3 2.8 V8.6 M10.9 6.4 L13.3 9 L15.7 6.4" stroke="#6b7280" stroke-width="1.6" fill="none"/></svg>
<div class="t s " style="left:117.2px;top:2013.5px;font-size:13px;line-height:20px;font-weight:400;color:#6b7280;letter-spacing:0.4px;">Markdown supported.</div>
<div class="b" style="left:1560.7px;top:2007.2px;width:89.7px;height:33.2px;background:#0a2328;border-radius:4px;"></div>
<div class="t s " style="left:1570px;top:2012.3px;font-size:15px;line-height:22px;font-weight:700;color:#6b7280;letter-spacing:0.44px;">Comment</div>
</body></html>
